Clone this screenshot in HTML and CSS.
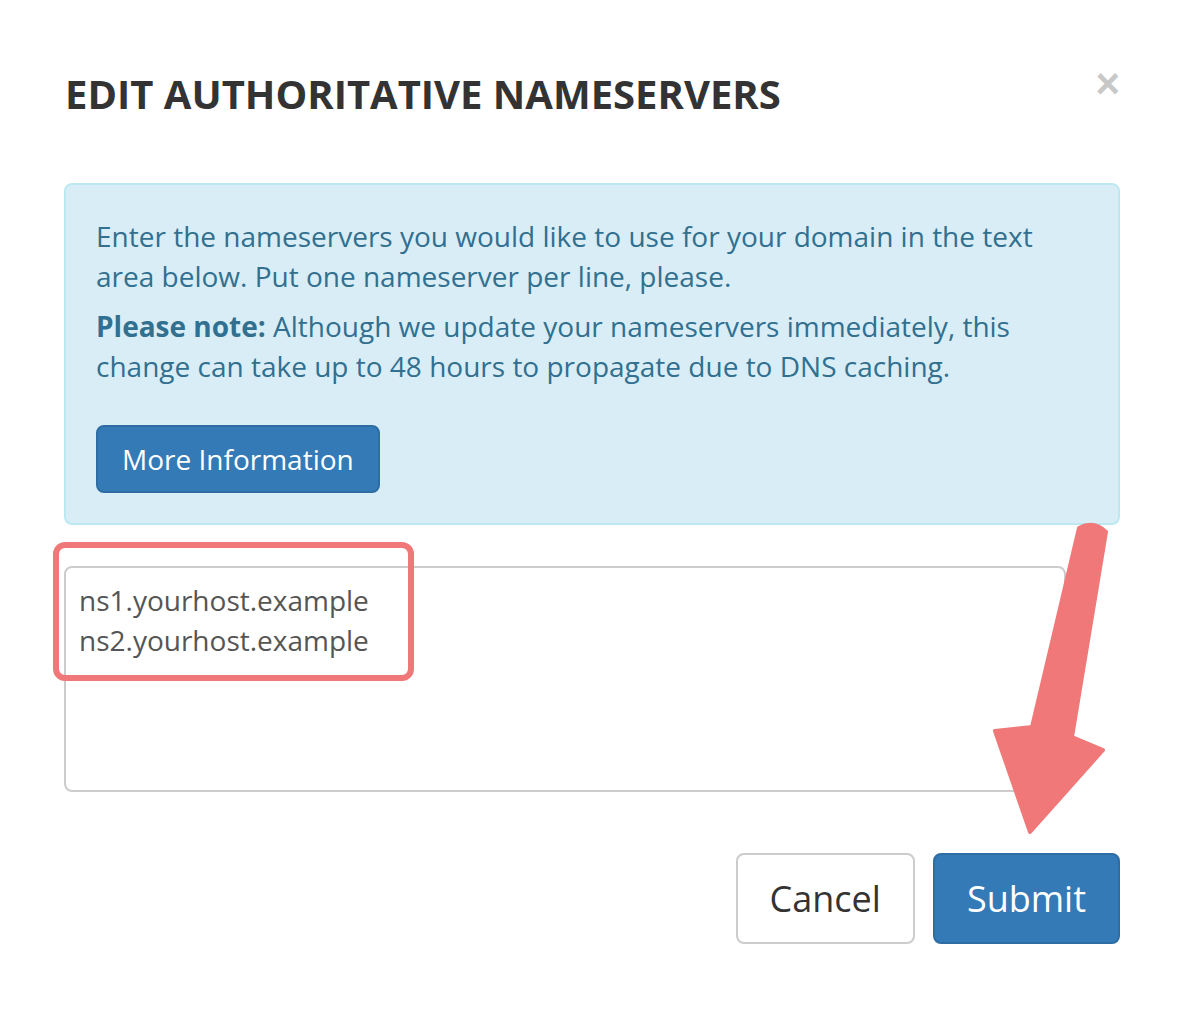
FILE: index.html
```html
<!DOCTYPE html>
<html>
  <head>
    <title>Edit Authoritative Nameservers</title>
    <link rel="stylesheet" href="styles.css">
  </head>

  <body>
    <div class="modal">
      <div class="modal-header">
        <h4 class="modal-title">EDIT AUTHORITATIVE NAMESERVERS</h4>
        <button class="close" type="button">&times;</button>
      </div>

      <div class="modal-body">
        <div class="alert alert-info">
          <p>Enter the nameservers you would like to use for your domain in the text area below. Put one nameserver per line, please.</p>
          <p><strong>Please note:</strong> Although we update your nameservers immediately, this change can take up to 48 hours to propagate due to DNS caching.</p>
          <div class="alert-actions">
            <a class="btn btn-primary" href="#">More Information</a>
          </div>
        </div>

        <div class="ns-field">
          <textarea class="form-control" readonly>ns1.yourhost.example
ns2.yourhost.example</textarea>
          <span class="highlight"></span>
        </div>
      </div>

      <div class="modal-footer">
        <button class="btn btn-default btn-lg" type="button">Cancel</button>
        <button class="btn btn-primary btn-lg" type="button">Submit</button>
      </div>

      <!-- annotation arrow pointing at the submit button -->
      <svg class="arrow" width="1186" height="1010" viewBox="0 0 1186 1010">
        <path d="M1079 528 Q1094 520 1106 532 L1072 737 L1103 750 L1030 832 L995 731 L1032 727 Z"
              fill="#f07878" stroke="#f07878" stroke-width="4" stroke-linejoin="round" />
      </svg>
    </div>
  </body>
</html>
```

FILE: styles.css
```css
body {
  margin: 0;
  background: #fff;
  font-family: "Open Sans", "Liberation Sans", sans-serif;
  color: #333;
}

.modal {
  position: relative;
  width: 1186px;
  height: 1010px;
  box-sizing: border-box;
  padding: 70px 66px 0 64px;
}

.modal-header {
  display: flex;
  justify-content: space-between;
  align-items: flex-start;
}

.modal-title {
  margin: 0 0 0 1px;
  font-size: 40px;
  line-height: 48px;
  font-weight: 700;
  color: #333;
}

.close {
  margin: 0 0 0 0;
  padding: 0;
  border: none;
  background: none;
  font-family: "Liberation Sans", sans-serif;
  font-size: 42px;
  font-weight: 700;
  line-height: 28px;
  color: #c8c8c8;
}

.modal-body {
  margin-top: 65px;
}

.alert {
  border: 2px solid #bce8f1;
  border-radius: 8px;
  padding: 31px 30px 30px 30px;
}

.alert-info {
  background: #d9edf7;
  color: #31708f;
}

.alert p {
  margin: 0 0 10px;
  font-size: 28px;
  line-height: 40px;
}

.alert strong {
  font-weight: 700;
}

.alert-actions {
  margin-top: 39px;
}

.btn {
  display: inline-block;
  box-sizing: border-box;
  border: 2px solid transparent;
  border-radius: 8px;
  padding: 12px 24px;
  font-family: "Open Sans", "Liberation Sans", sans-serif;
  font-size: 28px;
  line-height: 40px;
  text-decoration: none;
  cursor: pointer;
}

.btn-primary {
  background: #337ab7;
  border-color: #2e6da4;
  color: #fff;
}

.btn-default {
  background: #fff;
  border-color: #ccc;
  color: #333;
}

.btn-lg {
  padding: 20px 32px;
  font-size: 36px;
  line-height: 47px;
}

.ns-field {
  position: relative;
  margin-top: 41px;
  width: 1002px;
}

.form-control {
  display: block;
  box-sizing: border-box;
  width: 1002px;
  height: 226px;
  margin: 0;
  padding: 12px 13px;
  border: 2px solid #ccc;
  border-radius: 8px;
  font-family: "Open Sans", "Liberation Sans", sans-serif;
  font-size: 28px;
  line-height: 40px;
  color: #555;
  resize: none;
  outline: none;
}

.highlight {
  position: absolute;
  left: -11px;
  top: -24px;
  width: 361px;
  height: 139px;
  box-sizing: border-box;
  border: 6px solid #f07878;
  border-radius: 12px;
}

.modal-footer {
  display: flex;
  justify-content: flex-end;
  gap: 18px;
  margin-top: 61px;
}

.arrow {
  position: absolute;
  left: 0;
  top: 0;
  pointer-events: none;
}
```
